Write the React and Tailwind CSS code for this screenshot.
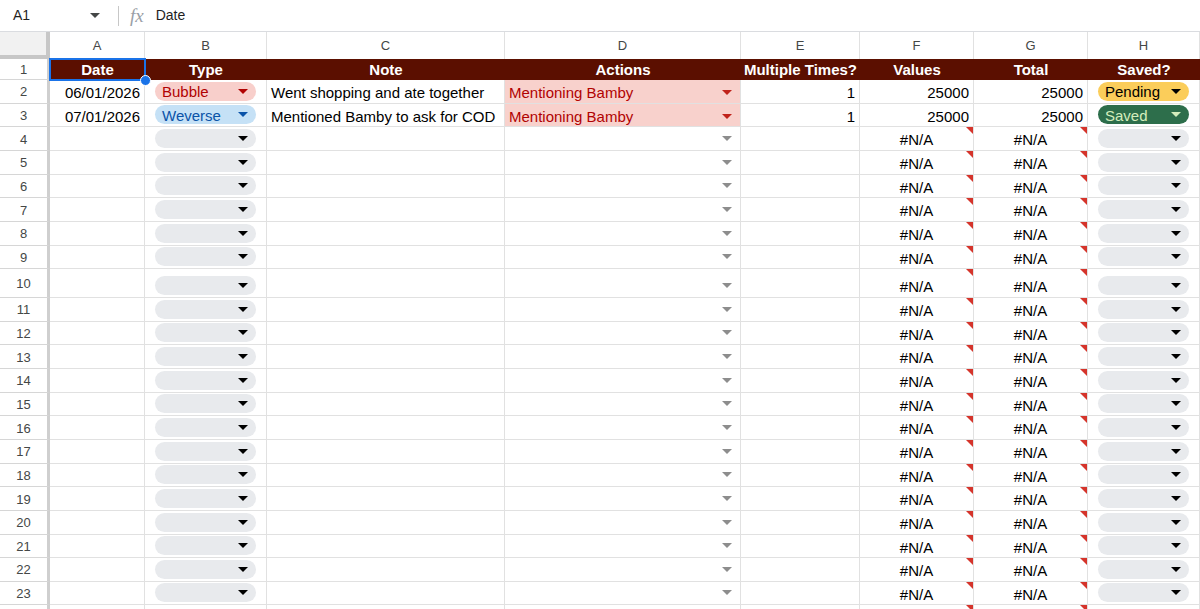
import React from "react";

const W = [50, 95, 122, 238, 236, 119, 114, 114, 112];
const letters = ["A", "B", "C", "D", "E", "F", "G", "H"];

function Tri({ color, className = "" }) {
  return (
    <svg width="10" height="5" viewBox="0 0 10 5" className={className}>
      <polygon points="0,0 10,0 5,5" fill={color} />
    </svg>
  );
}

function Chip({ label, bg, fg }) {
  return (
    <div
      className="mx-[10px] mb-[2px] flex h-[19px] w-full items-center justify-between rounded-full pl-[7px] pr-[8px] leading-[19px]"
      style={{ backgroundColor: bg, color: fg }}
    >
      <span className="pt-[1px]">{label}</span>
      <Tri color={fg} />
    </div>
  );
}

function ErrTri() {
  return (
    <svg width="7" height="7" viewBox="0 0 7 7" className="absolute right-0 top-0">
      <polygon points="0,0 7,0 7,7" fill="#d5342b" />
    </svg>
  );
}

function Cell({ i, children, className = "", style }) {
  return (
    <div
      className={"relative flex shrink-0 items-end border-b border-r border-[#e1e1e1] " + className}
      style={{ width: W[i], ...style }}
    >
      {children}
    </div>
  );
}

function RowHeader({ n }) {
  return (
    <div className="flex w-[50px] shrink-0 items-center justify-center border-b border-r-[3px] border-b-[#d6d6d6] border-r-[#cfcfcf] pt-[1px] text-[13px] text-[#444746]">
      {n}
    </div>
  );
}

const empty = { label: "", bg: "#e8eaed", fg: "#000000" };

export default function App() {
  const rows = [];
  for (let n = 4; n <= 24; n++) rows.push(n);

  return (
    <div
      className="h-[609px] w-[1200px] overflow-hidden bg-white text-[15px] text-black"
      style={{ fontFamily: '"Liberation Sans", Arial, sans-serif' }}
    >
      {/* formula bar */}
      <div className="flex h-[32px] items-center border-b border-[#dadce0] text-[14px] text-[#1f1f1f]">
        <div className="w-[90px] pl-[13px]">A1</div>
        <Tri color="#444746" />
        <div className="ml-[18px] h-[20px] w-px bg-[#c7c7c7]" />
        <div
          className="ml-[11px] text-[19px] italic leading-none text-[#9aa0a6]"
          style={{ fontFamily: '"Liberation Serif", serif' }}
        >
          fx
        </div>
        <div className="ml-[12px]">Date</div>
      </div>

      {/* column header */}
      <div className="flex h-[26.5px]">
        <div className="w-[50px] shrink-0 border-b-[4px] border-r-[4px] border-[#c7c7c7] bg-[#f1f1f1]" />
        {letters.map((l, i) => (
          <div
            key={l}
            className="flex shrink-0 items-center justify-center border-r border-[#e1e1e1] text-[13px] text-[#444746]"
            style={{ width: W[i + 1] }}
          >
            {l}
          </div>
        ))}
      </div>

      {/* row 1 */}
      <div className="flex h-[21.5px]">
        <RowHeader n={1} />
        {["Date", "Type", "Note", "Actions", "Multiple Times?", "Values", "Total", "Saved?"].map((t, i) => (
          <div
            key={t}
            className="relative flex shrink-0 items-end justify-center bg-[#5b0f00] pb-[1px] font-bold leading-[19px] text-white"
            style={{ width: W[i + 1] }}
          >
            {t}
            {i === 0 && (
              <>
                <div className="absolute -bottom-px -left-px -right-px -top-px z-10 border-2 border-[#1a73e8]" />
                <div className="absolute -bottom-[6px] -right-[6px] z-20 h-[11px] w-[11px] rounded-full border border-white bg-[#1a73e8]" />
              </>
            )}
          </div>
        ))}
      </div>

      {/* data rows */}
      {[
        {
          n: 2,
          date: "06/01/2026",
          type: { label: "Bubble", bg: "#f8cfcb", fg: "#b10202" },
          note: "Went shopping and ate together",
          saved: { label: "Pending", bg: "#fbcd5a", fg: "#000000" },
        },
        {
          n: 3,
          date: "07/01/2026",
          type: { label: "Weverse", bg: "#c5e1f6", fg: "#0a53a8" },
          note: "Mentioned Bamby to ask for COD",
          saved: { label: "Saved", bg: "#2d6e4b", fg: "#d4edbc" },
        },
      ].map((r) => (
        <div key={r.n} className="flex h-[23.66px] leading-[19px]">
          <RowHeader n={r.n} />
          <Cell i={1} className="justify-end pb-[0.5px] pr-[4px]">{r.date}</Cell>
          <Cell i={2}>
            <Chip {...r.type} />
          </Cell>
          <Cell i={3} className="pb-[0.5px] pl-[4px]">{r.note}</Cell>
          <Cell i={4} className="justify-between bg-[#f8d1cc] pb-[0.5px] pl-[4px] pr-[8px] text-[#b10202]">
            <span>Mentioning Bamby</span>
            <Tri color="#c0221a" className="mb-[7px]" />
          </Cell>
          <Cell i={5} className="justify-end pb-[0.5px] pr-[4px]">1</Cell>
          <Cell i={6} className="justify-end pb-[0.5px] pr-[4px]">25000</Cell>
          <Cell i={7} className="justify-end pb-[0.5px] pr-[4px]">25000</Cell>
          <Cell i={8}>
            <Chip {...r.saved} />
          </Cell>
        </div>
      ))}

      {rows.map((n) => {
        const last = n === 24;
        return (
          <div
            key={n}
            className={"flex leading-[19px] " + (n === 10 ? "h-[28.7px]" : "h-[23.66px]")}
          >
            <RowHeader n={last ? "" : n} />
            <Cell i={1} />
            <Cell i={2}>{!last && <Chip {...empty} />}</Cell>
            <Cell i={3} />
            <Cell i={4} className="justify-end pb-[9px] pr-[8px]">
              {!last && <Tri color="#8d8d8d" />}
            </Cell>
            <Cell i={5} />
            <Cell i={6} className="justify-center pb-[0.5px]">
              {!last && "#N/A"}
              <ErrTri />
            </Cell>
            <Cell i={7} className="justify-center pb-[0.5px]">
              {!last && "#N/A"}
              <ErrTri />
            </Cell>
            <Cell i={8}>{!last && <Chip {...empty} />}</Cell>
          </div>
        );
      })}
    </div>
  );
}
